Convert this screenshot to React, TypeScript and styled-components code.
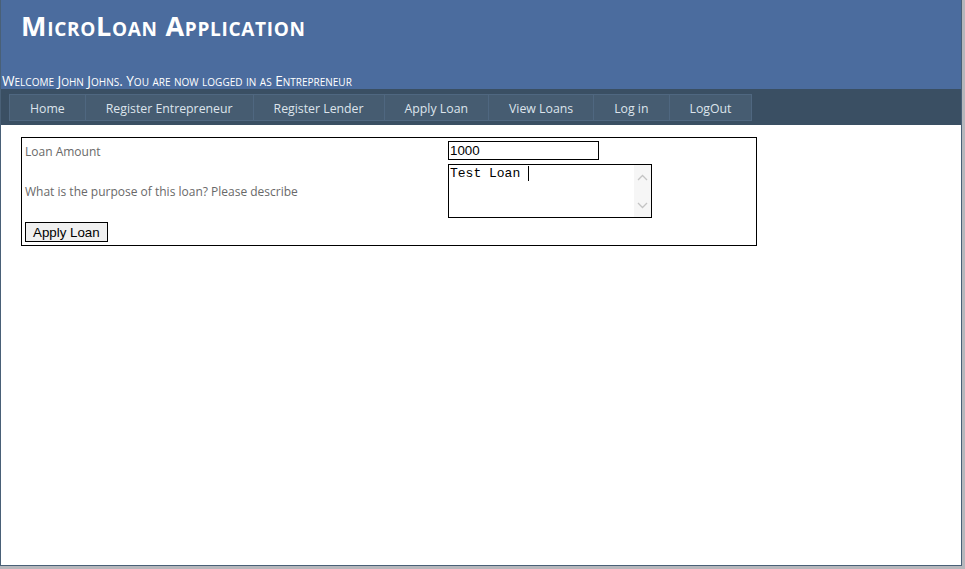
import React from "react";
import styled, { createGlobalStyle } from "styled-components";

const Global = createGlobalStyle`
  html, body { margin: 0; padding: 0; }
  body {
    background: #b6b7bc;
    font-family: "Open Sans", "Noto Sans", sans-serif;
    font-size: 12px;
    color: #696969;
  }
`;

const Page = styled.div`
  width: 960px;
  height: 565px;
  background: #fff;
  border: 1px solid #496077;
  border-top: none;
  display: flex;
  flex-direction: column;
`;

const Header = styled.header`
  background: #4b6c9e;
  display: flex;
  flex-direction: column;
  height: 89px;
  box-sizing: border-box;
`;

const Title = styled.h1`
  margin: 0;
  padding: 7px 0 0 20px;
  font-size: 27px;
  font-weight: 700;
  font-variant: small-caps;
  color: #fff;
  line-height: 38px;
  letter-spacing: 0.7px;
`;

const Welcome = styled.div`
  margin-top: auto;
  padding: 0 0 0 1px;
  font-size: 13.6px;
  font-variant: small-caps;
  color: #fff;
  line-height: 17px;
  letter-spacing: 0;
`;

const MenuBar = styled.nav`
  background: #3a4f63;
  padding: 5px 0 4px 8px;
  display: flex;
`;

const MenuItem = styled.a`
  display: block;
  background: #465c71;
  border: 1px solid #4f6780;
  color: #dde4ec;
  padding: 5px 20px 3px;
  line-height: 17px;
  font-size: 12.3px;
  text-decoration: none;
  white-space: nowrap;
  & + & { margin-left: -1px; }
`;

const Main = styled.main`
  margin: 12px 8px 8px 8px;
  padding: 0 12px;
`;

const FormTable = styled.table`
  width: 736px;
  border: 1px solid #000;
  border-spacing: 2px;
  td { padding: 1px; vertical-align: middle; line-height: 16px; }
`;

const LabelCell = styled.td`
  width: 419px;
  color: #696969;
  font-size: 12px;
  && { padding: 3px 1px 1px; }
`;

const TextInput = styled.input`
  display: block;
  box-sizing: border-box;
  width: 151px;
  height: 19px;
  border: 1px solid #000;
  padding: 0 1px;
  margin: 0;
  font-family: "Liberation Sans", Arial, sans-serif;
  font-size: 13.33px;
  color: #000;
  outline: none;
`;

const AreaBox = styled.div`
  box-sizing: border-box;
  width: 204px;
  height: 54px;
  border: 1px solid #000;
  display: flex;
  background: #fff;
`;

const AreaText = styled.div`
  flex: 1;
  padding: 1px 1px;
  font-family: "Liberation Mono", "Courier New", monospace;
  font-size: 13px;
  line-height: 15px;
  color: #000;
  white-space: pre;
`;

const Caret = styled.span`
  display: inline-block;
  width: 1px;
  height: 15px;
  background: #000;
  vertical-align: top;
`;

const ScrollBar = styled.div`
  width: 17px;
  background: #f6f6f6;
  display: flex;
  flex-direction: column;
  justify-content: space-between;
  align-items: center;
  padding: 9px 0 8px;
`;

const Button = styled.button`
  display: block;
  box-sizing: border-box;
  height: 20px;
  padding: 0 7px;
  border: 1px solid #000;
  background: #f0f0f0;
  font-family: "Liberation Sans", Arial, sans-serif;
  font-size: 13.33px;
  color: #000;
  margin: 0;
  border-radius: 0;
`;

const Chevron = ({ up }: { up?: boolean }) => (
  <svg width="11" height="7" viewBox="0 0 11 7">
    <path
      d={up ? "M1 6 L5.5 1.5 L10 6" : "M1 1 L5.5 5.5 L10 1"}
      fill="none"
      stroke="#c4c4c4"
      strokeWidth="1.3"
    />
  </svg>
);

const items = [
  "Home",
  "Register Entrepreneur",
  "Register Lender",
  "Apply Loan",
  "View Loans",
  "Log in",
  "LogOut",
];

export default function App() {
  return (
    <>
      <Global />
      <Page>
        <Header>
          <Title>MicroLoan Application</Title>
          <Welcome>Welcome John Johns. You are now logged in as Entrepreneur</Welcome>
        </Header>
        <MenuBar>
          {items.map((t) => (
            <MenuItem key={t} href="#">
              {t}
            </MenuItem>
          ))}
        </MenuBar>
        <Main>
          <FormTable>
            <tbody>
              <tr>
                <LabelCell>Loan Amount</LabelCell>
                <td>
                  <TextInput defaultValue="1000" />
                </td>
              </tr>
              <tr>
                <LabelCell>What is the purpose of this loan? Please describe</LabelCell>
                <td>
                  <AreaBox>
                    <AreaText>
                      Test Loan <Caret />
                    </AreaText>
                    <ScrollBar>
                      <Chevron up />
                      <Chevron />
                    </ScrollBar>
                  </AreaBox>
                </td>
              </tr>
              <tr>
                <td colSpan={2}>
                  <Button>Apply Loan</Button>
                </td>
              </tr>
            </tbody>
          </FormTable>
        </Main>
      </Page>
    </>
  );
}
